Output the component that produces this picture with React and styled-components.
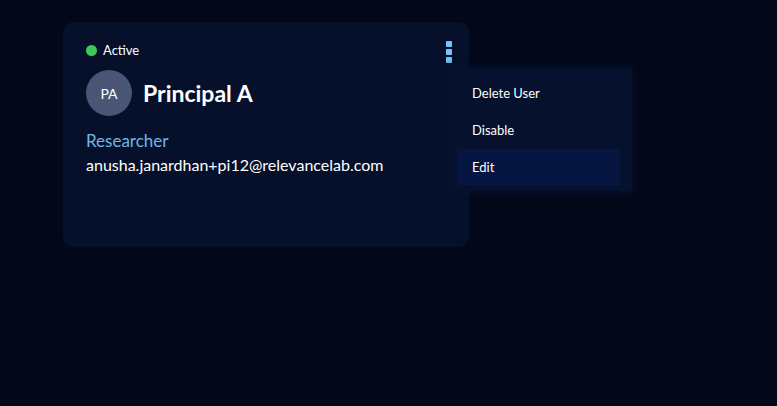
import React, { useState } from 'react'
import styled, { createGlobalStyle } from 'styled-components'

const GlobalStyle = createGlobalStyle`
  html, body {
    margin: 0;
    padding: 0;
    background: #020818;
    font-family: 'Lato', 'Noto Sans', sans-serif;
    color: #ffffff;
  }
`

const App = () => {
  const [active] = useState('Edit')
  const items = ['Delete User', 'Disable', 'Edit']

  return (
    <>
      <GlobalStyle />
      <Page>
        <Card>
          <TopRow>
            <Status>
              <StatusDot />
              Active
            </Status>
            <MenuWrap>
              <DotsButton aria-label="more">
                <Dot />
                <Dot />
                <Dot />
              </DotsButton>
              <Menu>
                {items.map(item => (
                  <MenuItem key={item} $active={item === active}>
                    {item}
                  </MenuItem>
                ))}
              </Menu>
            </MenuWrap>
          </TopRow>
          <NameRow>
            <Avatar>PA</Avatar>
            <Name>Principal A</Name>
          </NameRow>
          <Role>Researcher</Role>
          <Email>anusha.janardhan+pi12@relevancelab.com</Email>
        </Card>
      </Page>
    </>
  )
}

export default App

const Page = styled.div`
  width: 777px;
  height: 406px;
  padding: 22px 0 0 63px;
  box-sizing: border-box;
`

const Card = styled.div`
  width: 406px;
  height: 225px;
  box-sizing: border-box;
  background: #06102a;
  border-radius: 10px;
  padding: 18px 17px 18px 23px;
  display: flex;
  flex-direction: column;
`

const TopRow = styled.div`
  display: flex;
  justify-content: space-between;
  align-items: flex-start;
  height: 20px;
`

const Status = styled.div`
  display: flex;
  align-items: center;
  gap: 6px;
  font-size: 13px;
  height: 20px;
`

const StatusDot = styled.span`
  width: 11px;
  height: 11px;
  border-radius: 50%;
  background: #3ec85a;
`

const MenuWrap = styled.div`
  position: relative;
`

const DotsButton = styled.button`
  display: flex;
  flex-direction: column;
  gap: 2px;
  padding: 0;
  margin: 1px 0 0 0;
  border: none;
  background: transparent;
  cursor: pointer;
`

const Dot = styled.span`
  width: 6px;
  height: 6px;
  background: #72c4f8;
  border-radius: 1px;
`

const Menu = styled.ul`
  position: absolute;
  top: 28px;
  left: 0;
  width: 186px;
  margin: 0;
  padding: 7px 12px 5px;
  box-sizing: border-box;
  list-style: none;
  background: #06112d;
  box-shadow: 0 0 6px 2px rgba(8, 18, 45, 0.9);
  z-index: 2;
`

const MenuItem = styled.li`
  height: 37px;
  line-height: 37px;
  padding: 0 14px;
  font-size: 13px;
  color: #ffffff;
  background: ${p => (p.$active ? '#061640' : 'transparent')};
  cursor: pointer;
`

const NameRow = styled.div`
  display: flex;
  align-items: center;
  gap: 11px;
  margin-top: 10px;
`

const Avatar = styled.div`
  width: 46px;
  height: 46px;
  border-radius: 50%;
  background: #4a5576;
  display: flex;
  align-items: center;
  justify-content: center;
  font-size: 14px;
  color: #ffffff;
`

const Name = styled.div`
  font-size: 23px;
  font-weight: 700;
`

const Role = styled.div`
  margin-top: 14px;
  font-size: 17px;
  color: #6cb8e8;
`

const Email = styled.div`
  margin-top: 4px;
  font-size: 16px;
`
